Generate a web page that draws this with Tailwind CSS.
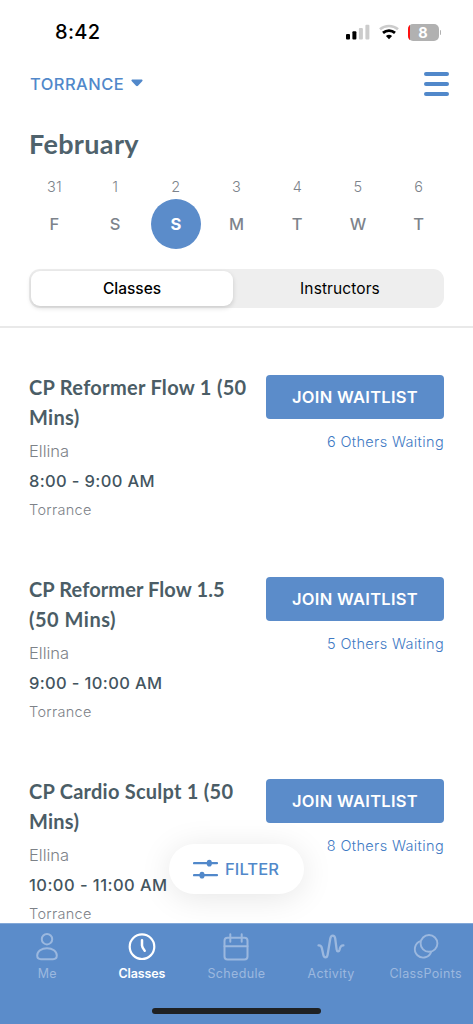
<!DOCTYPE html>
<html lang="en">
<head>
    <meta charset="UTF-8">
    <meta name="viewport" content="width=device-width, initial-scale=1.0">
    <title>Classes - Torrance</title>
    <script src="https://cdn.jsdelivr.net/npm/@tailwindcss/browser@4"></script>
</head>
<body class="bg-white font-['Inter','Liberation_Sans',sans-serif]">
    <div class="relative w-[473px] h-[1024px] overflow-hidden">
        <!-- Status bar -->
        <div class="h-16 pl-[55px] pr-[32px] flex items-center justify-between">
            <span class="text-[20px] leading-6 font-medium tracking-[0.3px] text-black">8:42</span>
            <div class="flex items-center">
                <svg class="w-6 h-4" viewBox="0 0 24 16">
                    <rect x="0" y="10" width="4" height="5.5" rx="1" fill="#000"/>
                    <rect x="6.4" y="7.3" width="4" height="8.2" rx="1" fill="#000"/>
                    <rect x="12.9" y="4" width="4" height="11.5" rx="1" fill="#ccc"/>
                    <rect x="19.4" y="0.7" width="4" height="14.8" rx="1" fill="#ccc"/>
                </svg>
                <svg class="w-5 h-4 ml-[9px]" viewBox="0 0 20 16" fill="none">
                    <path d="M1 5.3C6.1 .8 13.9 .8 19 5.3" stroke="#ccc" stroke-width="2.6"/>
                    <path d="M4 8.9C7.5 5.9 12.5 5.9 16 8.9" stroke="#000" stroke-width="2.8"/>
                    <path d="M6.9 12Q10 9.4 13.1 12L10 15.2Z" fill="#000"/>
                </svg>
                <div class="ml-[9px] w-[31px] h-[17px] rounded-[5px] overflow-hidden bg-[#b1b1b1] flex items-center">
                    <span class="w-[2px] h-full bg-[#ff1010]"></span>
                    <span class="flex-1 pr-[2px] text-center text-[14.5px] leading-[17px] font-bold text-white">8</span>
                </div>
                <div class="ml-px w-[1.5px] h-[5px] rounded-r bg-[#b1b1b1]"></div>
            </div>
        </div>

        <!-- Location and menu -->
        <div class="h-10 pl-[30px] pr-[24px] flex items-center justify-between">
            <div class="flex items-center text-[#5188ca]">
                <span class="text-[16.5px] leading-5 font-medium tracking-[0.45px]">TORRANCE</span>
                <svg class="ml-[7px] mb-[3px] w-3 h-2" viewBox="0 0 12 8"><path d="M1 .5h10q1 .5.4 1.5L7 6.8q-1 .9-2 0L.6 2Q0 1 1 .5Z" fill="currentColor"/></svg>
            </div>
            <div class="w-[25px] flex flex-col gap-[6px]">
                <div class="h-[4px] rounded-full bg-[#5188ca]"></div>
                <div class="h-[4px] rounded-full bg-[#5188ca]"></div>
                <div class="h-[4px] rounded-full bg-[#5188ca]"></div>
            </div>
        </div>

        <h1 class="mt-[22px] pl-[29px] h-9 leading-9 font-['Lato',sans-serif] font-bold text-[27px] tracking-[0.35px] text-[#4f626c]">February</h1>

        <!-- Week -->
        <div class="mt-[15px] px-6 grid grid-cols-7 text-center text-[#7d838b]">
            <div><p class="text-[14.5px] leading-5 font-light">31</p><p class="mt-[2px] leading-[50px] text-[16.5px] font-medium">F</p></div>
            <div><p class="text-[14.5px] leading-5 font-light">1</p><p class="mt-[2px] leading-[50px] text-[16.5px] font-medium">S</p></div>
            <div><p class="text-[14.5px] leading-5 font-light">2</p><p class="mt-[2px] mx-auto w-[50px] leading-[50px] rounded-full bg-[#5b8cca] text-white text-[16.5px] font-bold">S</p></div>
            <div><p class="text-[14.5px] leading-5 font-light">3</p><p class="mt-[2px] leading-[50px] text-[16.5px] font-medium">M</p></div>
            <div><p class="text-[14.5px] leading-5 font-light">4</p><p class="mt-[2px] leading-[50px] text-[16.5px] font-medium">T</p></div>
            <div><p class="text-[14.5px] leading-5 font-light">5</p><p class="mt-[2px] leading-[50px] text-[16.5px] font-medium">W</p></div>
            <div><p class="text-[14.5px] leading-5 font-light">6</p><p class="mt-[2px] leading-[50px] text-[16.5px] font-medium">T</p></div>
        </div>

        <!-- Classes / Instructors toggle -->
        <div class="mt-5 mx-[29px] h-[39px] p-[2px] rounded-[11px] bg-[#eeeeee] flex text-center text-[15.5px] leading-[35px] text-black">
            <div class="w-[202px] rounded-[9px] bg-white font-medium shadow-[0_2px_5px_rgba(0,0,0,0.15)]">Classes</div>
            <div class="flex-1 pl-[5px] tracking-[0.1px]">Instructors</div>
        </div>
        <div class="mt-[18px] h-[2px] bg-[#e9e9e9]"></div>

        <!-- Class list -->
        <div class="pl-[29px] pr-[29px] pt-[45px]">
            <div class="h-[202px] flex justify-between">
                <div class="w-[225px] whitespace-nowrap">
                    <h2 class="font-['Lato',sans-serif] font-bold text-[20px] leading-[29.5px] tracking-[0.3px] text-[#4b5d66]">CP Reformer Flow 1 (50<br>Mins)</h2>
                    <p class="mt-[7px] text-[16.5px] leading-6 font-light text-[#7d8288]">Ellina</p>
                    <p class="mt-[6px] text-[16.5px] leading-6 font-medium tracking-[0.35px] text-[#435560]">8:00 - 9:00 AM</p>
                    <p class="mt-[5px] text-[14.5px] leading-6 font-light tracking-[0.3px] text-[#7d8288]">Torrance</p>
                </div>
                <div class="w-[178px] pt-[2px] text-right">
                    <button class="w-full h-[44px] pt-px rounded-[4px] bg-[#5b8cca] text-white text-[16.5px] font-semibold tracking-[0.3px]">JOIN WAITLIST</button>
                    <p class="mt-[11px] text-[14.5px] leading-6 font-light tracking-[0.35px] text-[#3f7ac4]">6 Others Waiting</p>
                </div>
            </div>
            <div class="h-[202px] flex justify-between">
                <div class="w-[225px] whitespace-nowrap">
                    <h2 class="font-['Lato',sans-serif] font-bold text-[20px] leading-[29.5px] tracking-[0.1px] text-[#4b5d66]">CP Reformer Flow 1.5<br><span class="tracking-[0.5px]">(50 Mins)</span></h2>
                    <p class="mt-[7px] text-[16.5px] leading-6 font-light text-[#7d8288]">Ellina</p>
                    <p class="mt-[6px] text-[16.5px] leading-6 font-medium tracking-[0.35px] text-[#435560]">9:00 - 10:00 AM</p>
                    <p class="mt-[5px] text-[14.5px] leading-6 font-light tracking-[0.3px] text-[#7d8288]">Torrance</p>
                </div>
                <div class="w-[178px] pt-[2px] text-right">
                    <button class="w-full h-[44px] pt-px rounded-[4px] bg-[#5b8cca] text-white text-[16.5px] font-semibold tracking-[0.3px]">JOIN WAITLIST</button>
                    <p class="mt-[11px] text-[14.5px] leading-6 font-light tracking-[0.35px] text-[#3f7ac4]">5 Others Waiting</p>
                </div>
            </div>
            <div class="h-[202px] flex justify-between">
                <div class="w-[225px] whitespace-nowrap">
                    <h2 class="font-['Lato',sans-serif] font-bold text-[20px] leading-[29.5px] tracking-[0.25px] text-[#4b5d66]">CP Cardio Sculpt 1 (50<br>Mins)</h2>
                    <p class="mt-[7px] text-[16.5px] leading-6 font-light text-[#7d8288]">Ellina</p>
                    <p class="mt-[6px] text-[16.5px] leading-6 font-medium tracking-[0.45px] text-[#435560]">10:00 - 11:00 AM</p>
                    <p class="mt-[5px] text-[14.5px] leading-6 font-light tracking-[0.3px] text-[#7d8288]">Torrance</p>
                </div>
                <div class="w-[178px] pt-[2px] text-right">
                    <button class="w-full h-[44px] pt-px rounded-[4px] bg-[#5b8cca] text-white text-[16.5px] font-semibold tracking-[0.3px]">JOIN WAITLIST</button>
                    <p class="mt-[11px] text-[14.5px] leading-6 font-light tracking-[0.35px] text-[#3f7ac4]">8 Others Waiting</p>
                </div>
            </div>
        </div>

        <!-- Floating filter button -->
        <button class="absolute left-[169px] top-[844px] w-[135px] h-[50px] rounded-full bg-white shadow-[0_4px_32px_rgba(0,0,0,0.1)] flex items-center pl-[24px] text-[#5188ca]">
            <svg class="w-[26px] h-[22px]" viewBox="0 0 26 22" fill="currentColor" stroke="currentColor">
                <path d="M1 5.2h23M1 17.2h23" stroke-width="2.2" stroke-linecap="round"/>
                <ellipse cx="16.3" cy="5.2" rx="2.6" ry="3.4" stroke="none"/>
                <ellipse cx="9" cy="17.2" rx="2.6" ry="3.4" stroke="none"/>
            </svg>
            <span class="ml-[6px] text-[16.5px] font-medium tracking-[0.1px]">FILTER</span>
        </button>

        <!-- Tab bar -->
        <nav class="absolute left-0 bottom-0 w-full h-[101px] bg-[#5b8cca] border-t border-[#83a8d8]">
            <div class="pt-[8px] grid grid-cols-5 text-center text-[12.5px] leading-4 tracking-[0.35px] text-[#9bb8df]">
                <div class="flex flex-col items-center">
                    <svg class="w-7 h-[30px]" viewBox="0 0 28 30" fill="none" stroke="currentColor" stroke-width="2">
                        <circle cx="14" cy="7.2" r="5.2"/>
                        <path d="M14 16.2C8.5 16.2 4.2 19.3 4.2 23.6C4.2 26.2 5.5 27.2 8 27.2H20C22.5 27.2 23.8 26.2 23.8 23.6C23.8 19.3 19.5 16.2 14 16.2Z"/>
                    </svg>
                    <span class="mt-[4px]">Me</span>
                </div>
                <div class="flex flex-col items-center text-white">
                    <svg class="w-7 h-[30px]" viewBox="0 0 28 30" fill="none" stroke="currentColor" stroke-width="2.2" stroke-linecap="round">
                        <circle cx="14" cy="14.7" r="12.3"/>
                        <path d="M14 8.2V13.6Q14 15.6 16.7 18.7" stroke-width="2.5"/>
                    </svg>
                    <span class="mt-[4px] font-semibold tracking-[-0.1px]">Classes</span>
                </div>
                <div class="flex flex-col items-center">
                    <svg class="w-7 h-[30px]" viewBox="0 0 28 30" fill="none" stroke="currentColor" stroke-width="2" stroke-linecap="round">
                        <rect x="2.5" y="5.7" width="23" height="21.8" rx="3"/>
                        <path d="M2.5 14.2h23M8.3 2.2v7.6M19.7 2.2v7.6"/>
                    </svg>
                    <span class="mt-[4px]">Schedule</span>
                </div>
                <div class="flex flex-col items-center">
                    <svg class="w-7 h-[30px]" viewBox="0 0 28 30" fill="none" stroke="currentColor" stroke-width="2.3" stroke-linecap="round" stroke-linejoin="round">
                        <path d="M1.5 13.4C3.6 13.1 4.4 14 4.9 16.2L6.3 22.8C7 26.2 10 26.2 10.6 22.8L13.3 6.5C14 2.6 17.6 2.6 18.2 6.5L19.6 17.4C19.9 20 22 20 22.6 17.6C23.3 14.5 24 13.2 26.4 13.4"/>
                    </svg>
                    <span class="mt-[4px]">Activity</span>
                </div>
                <div class="flex flex-col items-center">
                    <svg class="w-7 h-[30px]" viewBox="0 0 28 30" fill="none" stroke="currentColor" stroke-width="1.9">
                        <circle cx="17" cy="11.4" r="8.4"/>
                        <path d="M8.6 9.2A8.4 8.4 0 1 0 19.3 19.5"/>
                    </svg>
                    <span class="mt-[4px]">ClassPoints</span>
                </div>
            </div>
            <div class="mt-[26px] mx-auto w-[169px] h-[6px] rounded-full bg-[#1f2123]"></div>
        </nav>
    </div>
</body>
</html>
